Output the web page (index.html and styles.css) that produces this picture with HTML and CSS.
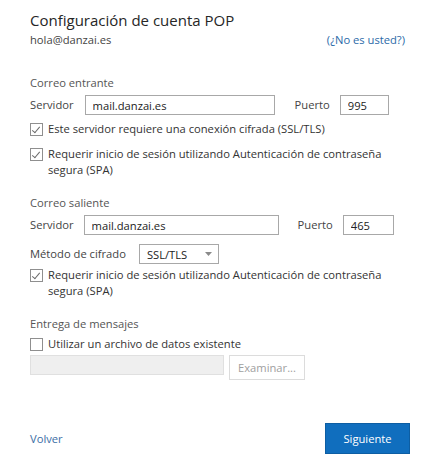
FILE: index.html
```html
<!DOCTYPE html>
<html lang="es">
  <head>
    <meta charset="UTF-8" />
    <meta name="viewport" content="width=device-width, initial-scale=1.0" />
    <title>Configuración de cuenta POP</title>
    <link rel="stylesheet" href="styles.css">
  </head>
  <body>
    <div class="page">
      <h1 class="title">Configuración de cuenta POP</h1>
      <div class="account">
        <span>hola@danzai.es</span>
        <a href="#" class="link">(¿No es usted?)</a>
      </div>

      <div class="section incoming">
        <div class="section-label">Correo entrante</div>
        <div class="server-row">
          <label class="field-label">Servidor</label>
          <input class="text-input server" type="text" value="mail.danzai.es">
          <label class="field-label port-label">Puerto</label>
          <input class="text-input port" type="text" value="995">
        </div>
        <div class="check first">
          <span class="box checked"></span>
          <span class="check-text">Este servidor requiere una conexión cifrada (SSL/TLS)</span>
        </div>
        <div class="check">
          <span class="box checked"></span>
          <span class="check-text">Requerir inicio de sesión utilizando Autenticación de contraseña segura (SPA)</span>
        </div>
      </div>

      <div class="section outgoing">
        <div class="section-label">Correo saliente</div>
        <div class="server-row">
          <label class="field-label">Servidor</label>
          <input class="text-input server wide" type="text" value="mail.danzai.es">
          <label class="field-label port-label">Puerto</label>
          <input class="text-input port" type="text" value="465">
        </div>
        <div class="method-row">
          <label class="field-label">Método de cifrado</label>
          <div class="select">
            <span>SSL/TLS</span>
            <svg class="caret" width="7" height="4" viewBox="0 0 7 4"><path d="M0 0h7L3.5 4z" fill="#8a8a8a"/></svg>
          </div>
        </div>
        <div class="check after-method">
          <span class="box checked"></span>
          <span class="check-text">Requerir inicio de sesión utilizando Autenticación de contraseña segura (SPA)</span>
        </div>
      </div>

      <div class="section delivery">
        <div class="section-label">Entrega de mensajes</div>
        <div class="check single">
          <span class="box"></span>
          <span class="check-text">Utilizar un archivo de datos existente</span>
        </div>
        <div class="browse-row">
          <div class="path-input"></div>
          <button class="browse" disabled>Examinar...</button>
        </div>
      </div>

      <div class="footer">
        <a href="#" class="back">Volver</a>
        <button class="next">Siguiente</button>
      </div>
    </div>
  </body>
</html>
```

FILE: styles.css
```css
* {
  margin: 0;
  padding: 0;
  box-sizing: border-box;
}

body {
  background: #fff;
  font-family: "Open Sans", "Noto Sans", sans-serif;
  font-size: 11.2px;
  color: #444;
}

.page {
  width: 439px;
  padding: 8px 29px 0 30px;
}

.title {
  font-size: 15px;
  font-weight: 400;
  line-height: 24px;
  color: #262626;
}

.account {
  display: flex;
  justify-content: space-between;
  line-height: 16px;
  padding-right: 5px;
  color: #444;
}

.link {
  color: #2b6aa8;
  text-decoration: none;
}

.section-label {
  line-height: 16px;
  color: #555;
}

.incoming {
  margin-top: 27px;
}

.outgoing {
  margin-top: 17px;
}

.delivery {
  margin-top: 17px;
}

.server-row {
  display: flex;
  align-items: center;
  height: 20px;
  margin-top: 4px;
}

.field-label {
  color: #444;
  line-height: 16px;
}

.text-input {
  height: 20px;
  border: 1px solid #a8a8a8;
  font: inherit;
  color: #222;
  padding: 0 7px;
  outline: none;
}

.server {
  width: 190px;
  margin-left: 11px;
}

.server.wide {
  width: 195px;
  margin-left: 10px;
}

.port-label {
  margin-left: 20px;
}

.port {
  width: 49px;
  margin-left: 10px;
}

.outgoing .port {
  width: 51px;
}

.outgoing .port-label {
  margin-left: 19px;
}

.method-row {
  display: flex;
  align-items: center;
  height: 20px;
  margin-top: 9px;
}

.select {
  display: flex;
  align-items: center;
  justify-content: space-between;
  width: 80px;
  height: 20px;
  margin-left: 13px;
  padding: 0 6px 0 7px;
  border: 1px solid #a8a8a8;
  color: #222;
}

.check {
  display: flex;
  align-items: flex-start;
  margin-top: 9px;
  line-height: 16px;
  padding-right: 10px;
}

.check.first {
  margin-top: 6px;
}

.check.after-method {
  margin-top: 3px;
}

.delivery .check {
  margin-top: 4px;
}

.box {
  flex-shrink: 0;
  position: relative;
  width: 13px;
  height: 13px;
  margin-top: 2px;
  margin-right: 5px;
  border: 1px solid #8f8f8f;
  background: #fff;
}

.box.checked::after {
  content: "";
  position: absolute;
  left: 3px;
  top: 1px;
  width: 3px;
  height: 7px;
  border-right: 1px solid #6a6a6a;
  border-bottom: 1px solid #6a6a6a;
  transform: rotate(40deg);
}

.check-text {
  color: #333;
}

.browse-row {
  display: flex;
  align-items: flex-start;
  margin-top: 3px;
}

.path-input {
  width: 194px;
  height: 20px;
  background: #efefef;
  border: 1px solid #e0e0e0;
}

.browse {
  width: 76px;
  height: 25px;
  margin-left: 5px;
  background: #fff;
  border: 1px solid #dcdcdc;
  font: inherit;
  color: #a0a0a0;
}

.footer {
  display: flex;
  justify-content: space-between;
  align-items: center;
  margin-top: 43px;
}

.back {
  color: #3b6ea5;
  text-decoration: none;
}

.next {
  width: 85px;
  height: 31px;
  background: #106ebe;
  border: 1px solid #0d5ea3;
  color: #fff;
  font: inherit;
}
```
